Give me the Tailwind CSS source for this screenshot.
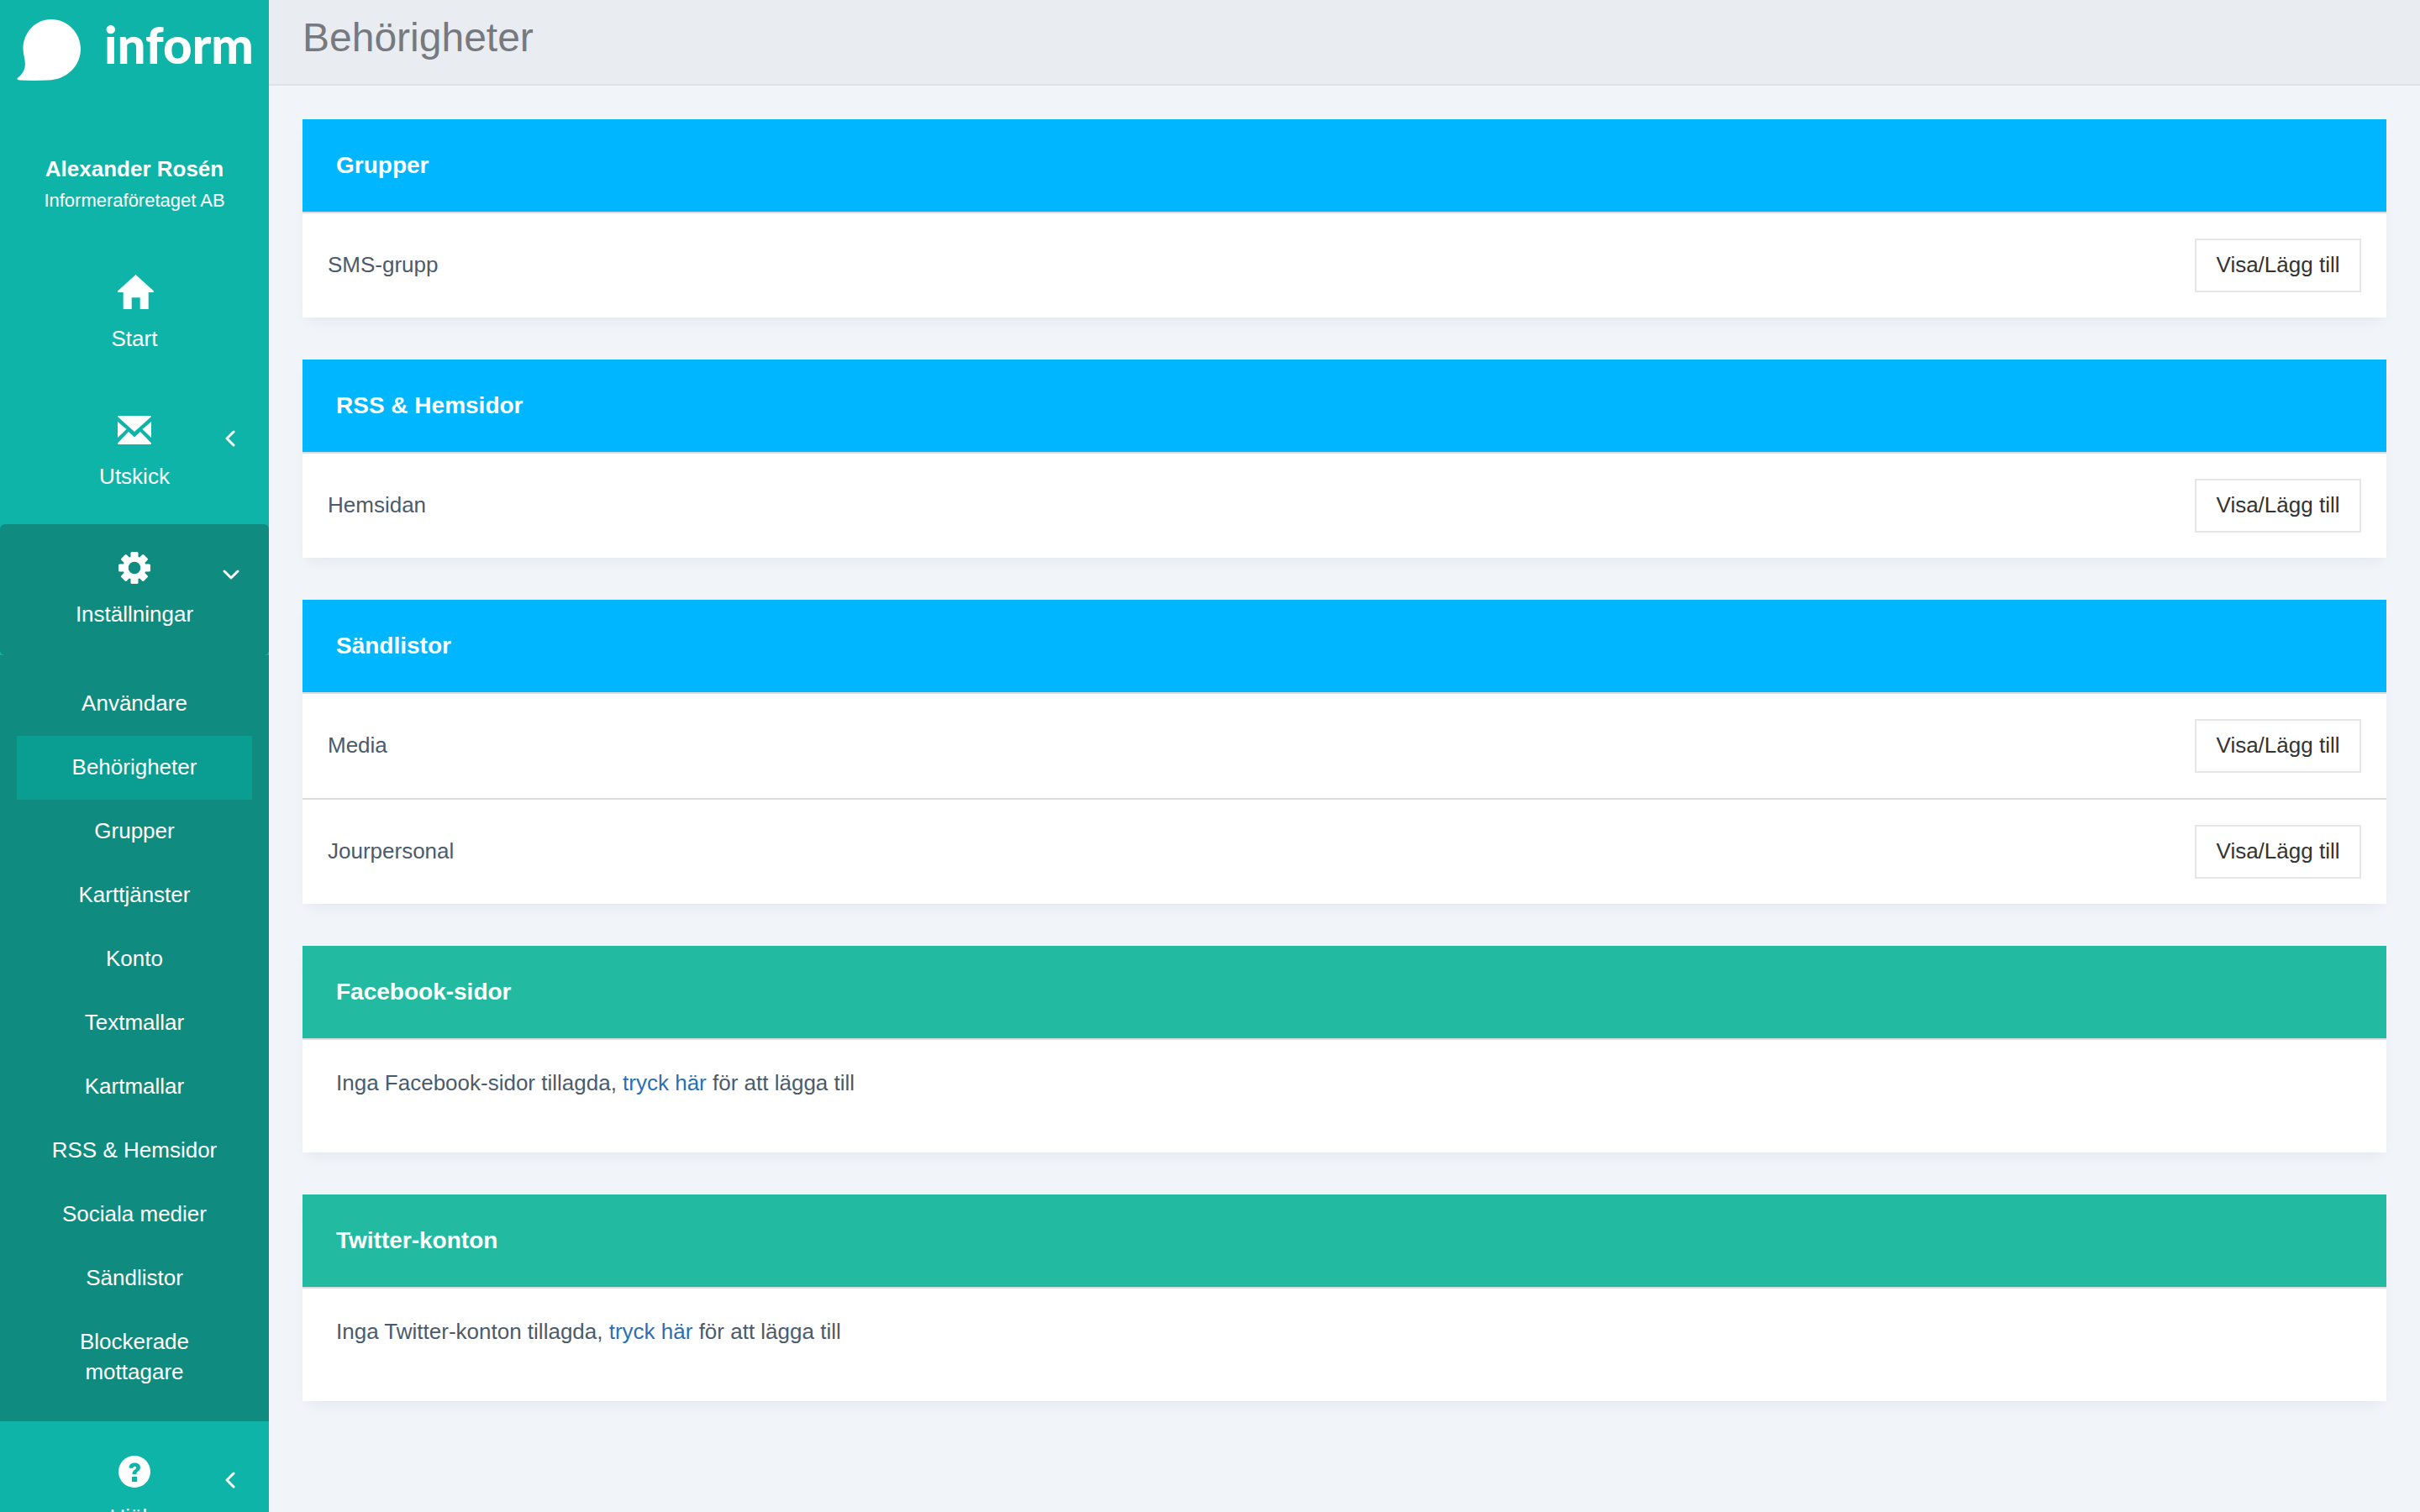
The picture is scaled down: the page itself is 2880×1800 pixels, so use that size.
<!DOCTYPE html>
<html lang="sv">

<head>
    <meta charset="UTF-8">
    <title>Behörigheter</title>
    <script src="https://cdn.jsdelivr.net/npm/@tailwindcss/browser@4"></script>
</head>

<body class="h-[1800px] overflow-hidden bg-[#f1f4f9] font-['Liberation_Sans',Arial,sans-serif] text-[26px] text-[#4b5b6b]">
    <div class="flex h-[1800px]">
        <!-- sidebar -->
        <aside class="w-[320px] shrink-0 h-[1800px] overflow-hidden bg-[#0eb4a8] text-white text-center">
            <div class="relative h-[102px]">
                <svg class="absolute left-[20px] top-[22px]" width="78" height="75" viewBox="0 0 78 75" fill="#fff">
                    <path d="M1 71C4 68 8 65 9.500 58C11 51 7.500 43 7.500 36C7.500 17 22 1 41 1C60 1 76 17 76 36C76 57 59 73 37 73.500C26 74 14 74 4 73.500C1 73.500 -0.500 72.500 1 71Z" />
                </svg>
                <span class="absolute left-[124px] top-[15px] font-['Lato',sans-serif] font-black text-[60px] leading-[76px]">inform</span>
            </div>
            <div class="pt-[81px] font-bold text-[26px] leading-[36px]">Alexander Rosén</div>
            <div class="mt-[2px] text-[22px] leading-[36px]">Informeraföretaget AB</div>

            <nav class="mt-[70px]">
                <a class="flex flex-col items-center h-[165px]">
                    <svg class="ml-[4px]" width="44" height="42" viewBox="0 0 44 42" fill="#fff">
                        <path d="M21.500 0L43 19.500L42.500 21H36.700V41H26.700V27.300H16.700V41H6.700V21H0.500L0 19.500Z" />
                    </svg>
                    <span class="mt-[16px] leading-[36px]">Start</span>
                </a>
                <a class="relative flex flex-col items-center h-[132px] pt-[3px]">
                    <svg width="40" height="34" viewBox="0 0 40 34" fill="#fff">
                        <path d="M0 0H40V1L20 19L0 1Z" />
                        <path d="M0 7L10.500 16L0 26Z" />
                        <path d="M40 7L29.500 16L40 26Z" />
                        <path d="M0 32.500L13 19L20 25.500L27 19L40 32.500V34H0Z" />
                    </svg>
                    <span class="mt-[20px] leading-[36px]">Utskick</span>
                    <svg class="absolute left-[268px] top-[20px]" width="12" height="20" viewBox="0 0 12 20" fill="none" stroke="#fff" stroke-width="3" stroke-linecap="round" stroke-linejoin="round">
                        <path d="M10 2L2 10L10 18" />
                    </svg>
                </a>
            </nav>

            <a class="relative flex flex-col items-center h-[156px] pt-[33px] rounded-[6px] bg-[#0f8b80]">
                <svg width="38" height="38" viewBox="0 0 38 38" fill="#fff">
                    <circle cx="19" cy="19" r="10.500" fill="none" stroke="#fff" stroke-width="6.500" />
                    <rect x="14.500" y="0" width="9" height="8" rx="1.500" />
                    <rect x="14.500" y="0" width="9" height="8" rx="1.500" transform="rotate(45 19 19)" />
                    <rect x="14.500" y="0" width="9" height="8" rx="1.500" transform="rotate(90 19 19)" />
                    <rect x="14.500" y="0" width="9" height="8" rx="1.500" transform="rotate(135 19 19)" />
                    <rect x="14.500" y="0" width="9" height="8" rx="1.500" transform="rotate(180 19 19)" />
                    <rect x="14.500" y="0" width="9" height="8" rx="1.500" transform="rotate(225 19 19)" />
                    <rect x="14.500" y="0" width="9" height="8" rx="1.500" transform="rotate(270 19 19)" />
                    <rect x="14.500" y="0" width="9" height="8" rx="1.500" transform="rotate(315 19 19)" />
                </svg>
                <span class="mt-[18px] leading-[36px]">Inställningar</span>
                <svg class="absolute left-[265px] top-[54px]" width="20" height="12" viewBox="0 0 20 12" fill="none" stroke="#fff" stroke-width="3" stroke-linecap="round" stroke-linejoin="round">
                    <path d="M2 2L10 10L18 2" />
                </svg>
            </a>
            <ul class="bg-[#0f8b80] py-[20px] px-[20px] leading-[36px]">
                <li class="pt-[19px] pb-[21px]">Användare</li>
                <li class="pt-[19px] pb-[21px] bg-[#0a9e92]">Behörigheter</li>
                <li class="pt-[19px] pb-[21px]">Grupper</li>
                <li class="pt-[19px] pb-[21px]">Karttjänster</li>
                <li class="pt-[19px] pb-[21px]">Konto</li>
                <li class="pt-[19px] pb-[21px]">Textmallar</li>
                <li class="pt-[19px] pb-[21px]">Kartmallar</li>
                <li class="pt-[19px] pb-[21px]">RSS &amp; Hemsidor</li>
                <li class="pt-[19px] pb-[21px]">Sociala medier</li>
                <li class="pt-[19px] pb-[21px]">Sändlistor</li>
                <li class="pt-[19px] pb-[21px]">Blockerade<br>mottagare</li>
            </ul>

            <a class="relative flex flex-col items-center pt-[41px]">
                <svg width="38" height="38" viewBox="0 0 38 38">
                    <circle cx="19" cy="19" r="19" fill="#fff" />
                    <path d="M12.500 14.500C12.500 10.500 15.500 8.500 19.500 8.500C23.500 8.500 26 10.800 26 14C26 17 24 18 22.500 19.200C21.500 20 21.500 20.500 21.500 22H16.500C16.500 19.500 17 18.500 19 17C20.500 16 21 15.500 21 14.300C21 13.300 20.300 12.800 19.300 12.800C18 12.800 17.300 13.500 17.300 15Z" fill="#0eb4a8" />
                    <rect x="16" y="25" width="6" height="6" fill="#0eb4a8" />
                </svg>
                <span class="mt-[17px] leading-[36px]">Hjälp</span>
                <svg class="absolute left-[268px] top-[60px]" width="12" height="20" viewBox="0 0 12 20" fill="none" stroke="#fff" stroke-width="3" stroke-linecap="round" stroke-linejoin="round">
                    <path d="M10 2L2 10L10 18" />
                </svg>
            </a>
        </aside>

        <!-- main -->
        <main class="flex-1 min-w-0">
            <header class="h-[102px] bg-[#e9ecf1] border-b-2 border-[#dfe2e7] px-[40px]">
                <h1 class="text-[48px] leading-[90px] text-[#767a80]">Behörigheter</h1>
            </header>

            <div class="px-[40px] pt-[40px] flex flex-col gap-[50px]">
                <section class="bg-white shadow-[0_8px_16px_-6px_rgba(40,60,90,0.08)]">
                    <h2 class="h-[112px] flex items-center px-[40px] bg-[#00b6ff] border-b-2 border-[#dadde0] font-bold text-[28px] text-white">Grupper</h2>
                    <div class="h-[124px] flex items-center justify-between px-[30px]">
                        <span class="-mt-[2px]">SMS-grupp</span>
                        <button class="w-[198px] h-[64px] pb-[2px] border-2 border-[#e6e6e6] text-[26px] text-[#333]">Visa/Lägg till</button>
                    </div>
                </section>

                <section class="bg-white shadow-[0_8px_16px_-6px_rgba(40,60,90,0.08)]">
                    <h2 class="h-[112px] flex items-center px-[40px] bg-[#00b6ff] border-b-2 border-[#dadde0] font-bold text-[28px] text-white">RSS &amp; Hemsidor</h2>
                    <div class="h-[124px] flex items-center justify-between px-[30px]">
                        <span class="-mt-[2px]">Hemsidan</span>
                        <button class="w-[198px] h-[64px] pb-[2px] border-2 border-[#e6e6e6] text-[26px] text-[#333]">Visa/Lägg till</button>
                    </div>
                </section>

                <section class="bg-white shadow-[0_8px_16px_-6px_rgba(40,60,90,0.08)]">
                    <h2 class="h-[112px] flex items-center px-[40px] bg-[#00b6ff] border-b-2 border-[#dadde0] font-bold text-[28px] text-white">Sändlistor</h2>
                    <div class="h-[126px] flex items-center justify-between px-[30px] border-b-2 border-[#dddddd]">
                        <span class="-mt-[2px]">Media</span>
                        <button class="w-[198px] h-[64px] pb-[2px] border-2 border-[#e6e6e6] text-[26px] text-[#333]">Visa/Lägg till</button>
                    </div>
                    <div class="h-[124px] flex items-center justify-between px-[30px]">
                        <span class="-mt-[2px]">Jourpersonal</span>
                        <button class="w-[198px] h-[64px] pb-[2px] border-2 border-[#e6e6e6] text-[26px] text-[#333]">Visa/Lägg till</button>
                    </div>
                </section>

                <section class="bg-white shadow-[0_8px_16px_-6px_rgba(40,60,90,0.08)]">
                    <h2 class="h-[112px] flex items-center px-[40px] bg-[#22bba1] border-b-2 border-[#dadde0] font-bold text-[28px] text-white">Facebook-sidor</h2>
                    <p class="h-[134px] px-[40px] pt-[33px] leading-[36px]">Inga Facebook-sidor tillagda, <a class="text-[#2a6fb5]">tryck här</a> för att lägga till</p>
                </section>

                <section class="bg-white shadow-[0_8px_16px_-6px_rgba(40,60,90,0.08)]">
                    <h2 class="h-[112px] flex items-center px-[40px] bg-[#22bba1] border-b-2 border-[#dadde0] font-bold text-[28px] text-white">Twitter-konton</h2>
                    <p class="h-[134px] px-[40px] pt-[33px] leading-[36px]">Inga Twitter-konton tillagda, <a class="text-[#2a6fb5]">tryck här</a> för att lägga till</p>
                </section>
            </div>
        </main>
    </div>
</body>

</html>
